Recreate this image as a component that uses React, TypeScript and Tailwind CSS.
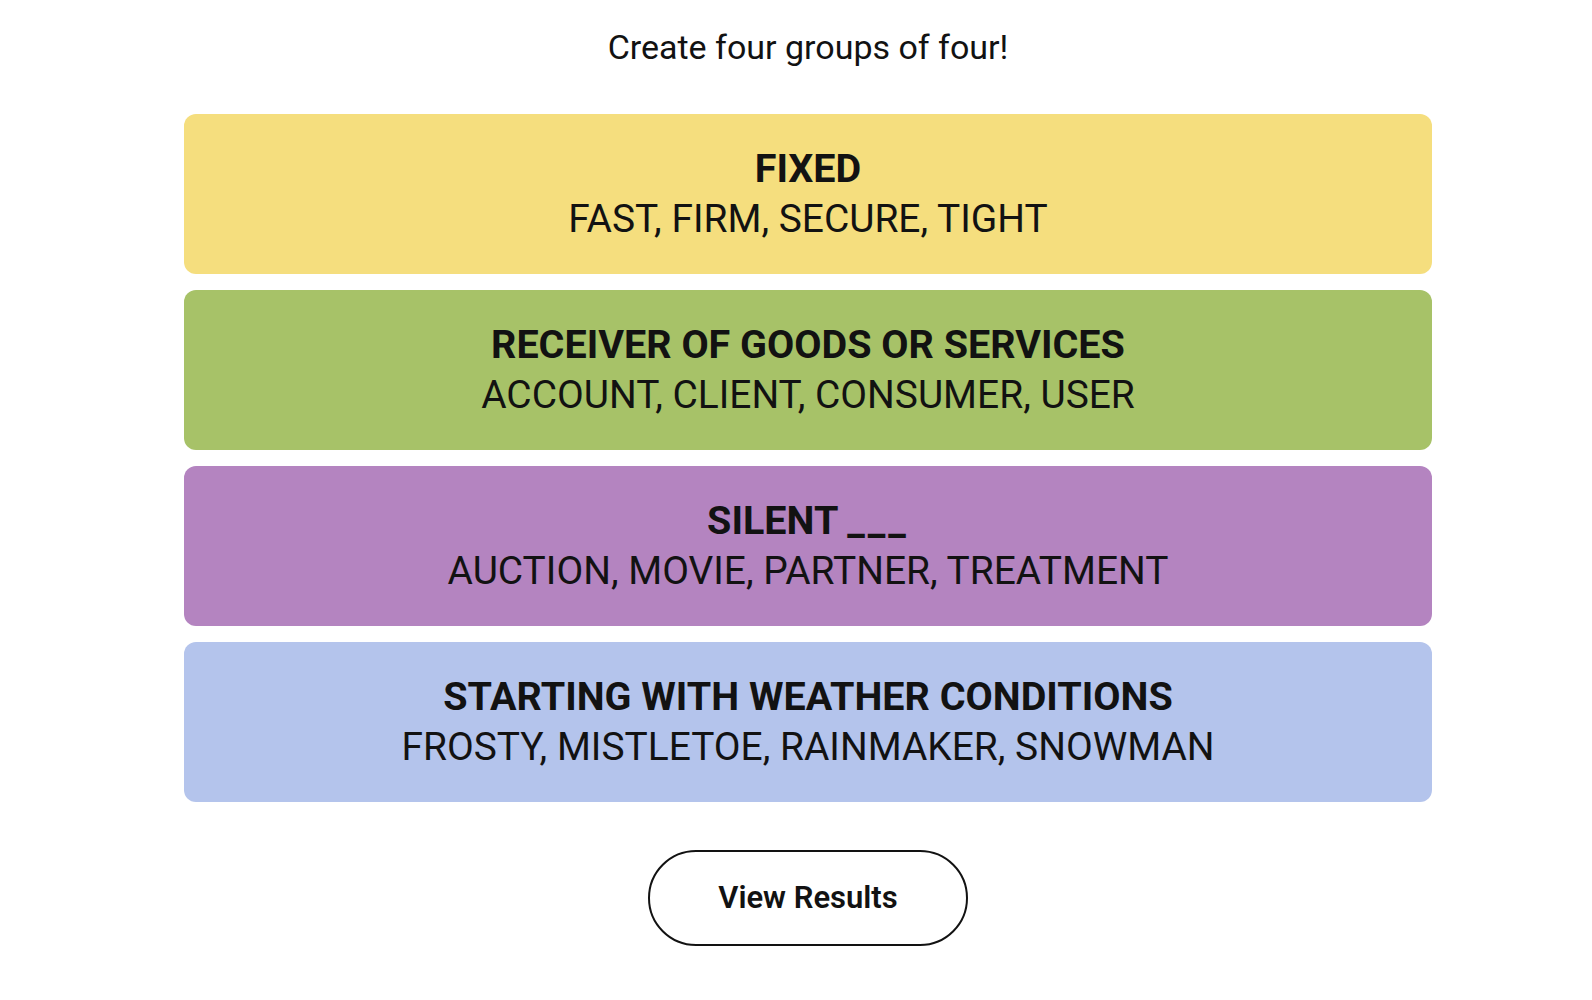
import React from "react";

const groups = [
  { title: "FIXED", words: "FAST, FIRM, SECURE, TIGHT", bg: "bg-[#f5de7e]" },
  { title: "RECEIVER OF GOODS OR SERVICES", words: "ACCOUNT, CLIENT, CONSUMER, USER", bg: "bg-[#a7c268]" },
  { title: "SILENT ___", words: "AUCTION, MOVIE, PARTNER, TREATMENT", bg: "bg-[#b484c0]" },
  { title: "STARTING WITH WEATHER CONDITIONS", words: "FROSTY, MISTLETOE, RAINMAKER, SNOWMAN", bg: "bg-[#b4c4ec]" },
];

function Title({ text }: { text: string }) {
  const idx = text.indexOf("___");
  if (idx < 0) return <>{text}</>;
  return (
    <>
      {text.slice(0, idx)}
      <span className="tracking-[3px]">___</span>
    </>
  );
}

export default function App() {
  return (
    <div
      className="min-h-[1000px] bg-white text-[#121212] pl-[24px] flex flex-col items-center"
      style={{ fontFamily: "Roboto, 'Liberation Sans', sans-serif" }}
    >
      <p className="mt-[23px] text-[34px] leading-[48px]">Create four groups of four!</p>
      <div className="mt-[43px] w-[1248px] flex flex-col gap-[16px]">
        {groups.map((g) => (
          <div
            key={g.title}
            className={`${g.bg} h-[160px] rounded-[12px] flex flex-col items-center justify-center`}
          >
            <div className="text-[39.5px] leading-[50px] font-bold">
              <Title text={g.title} />
            </div>
            <div className="text-[38.9px] leading-[50px]">{g.words}</div>
          </div>
        ))}
      </div>
      <button className="mt-[48px] w-[320px] h-[96px] rounded-full border-2 border-[#121212] bg-white text-[31px] font-semibold">
        View Results
      </button>
    </div>
  );
}
